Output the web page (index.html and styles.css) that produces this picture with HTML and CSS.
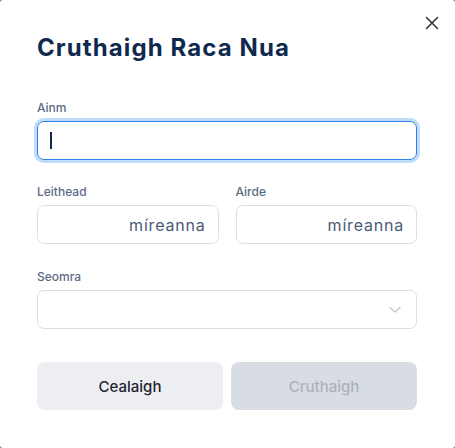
FILE: index.html
```html
<!DOCTYPE html>
<html lang="ga">
<head>
<meta charset="utf-8">
<title>Cruthaigh Raca Nua</title>
<link rel="stylesheet" href="styles.css">
</head>
<body>
<div class="dialog">
  <button class="close" aria-label="Dún">
    <svg width="14" height="14" viewBox="0 0 14 14"><path d="M1.5 1.5 L12.5 12.5 M12.5 1.5 L1.5 12.5" stroke="#333" stroke-width="1.6" stroke-linecap="round" fill="none"/></svg>
  </button>
  <h2 class="title">Cruthaigh Raca Nua</h2>
  <div class="field">
    <label class="label">Ainm</label>
    <div class="input focused"><span class="caret"></span></div>
  </div>
  <div class="row">
    <div class="field">
      <label class="label">Leithead</label>
      <div class="input unit"><span class="suffix">míreanna</span></div>
    </div>
    <div class="field">
      <label class="label">Airde</label>
      <div class="input unit"><span class="suffix">míreanna</span></div>
    </div>
  </div>
  <div class="field seomra">
    <label class="label">Seomra</label>
    <div class="input select">
      <svg width="12" height="8" viewBox="0 0 12 8"><path d="M1 1.5 L6 6 L11 1.5" stroke="#c4c8ce" stroke-width="1.4" fill="none" stroke-linecap="round" stroke-linejoin="round"/></svg>
    </div>
  </div>
  <div class="actions">
    <button class="btn cancel">Cealaigh</button>
    <button class="btn create" disabled>Cruthaigh</button>
  </div>
</div>
</body>
</html>
```
FILE: styles.css
```css
* { box-sizing: border-box; }
html, body { margin: 0; padding: 0; }
body {
  background: #7a7a7a;
  font-family: Inter, "Noto Sans", sans-serif;
  width: 455px;
  height: 448px;
  overflow: hidden;
}
.dialog {
  position: relative;
  width: 455px;
  height: 448px;
  background: #fff;
  border-radius: 3px;
  padding: 34px 38px 0 37px;
}
.close {
  position: absolute;
  top: 16px;
  right: 16px;
  width: 14px;
  height: 14px;
  padding: 0;
  border: 0;
  background: none;
  display: flex;
}
.title {
  margin: 0 0 38px;
  font-size: 24px;
  line-height: 28px;
  font-weight: 700;
  letter-spacing: 1.1px;
  color: #0f2a4e;
}
.field { display: flex; flex-direction: column; }
.field + .row { margin-top: 24px; }
.row + .field { margin-top: 25px; }
.label {
  font-size: 12px;
  line-height: 16px;
  font-weight: 500;
  color: #5c6b85;
  margin-bottom: 5px;
}
.input {
  height: 39px;
  border: 1px solid #dcdfe4;
  border-radius: 7px;
  display: flex;
  align-items: center;
  padding: 0 12px;
}
.focused {
  border-color: #2f80e8;
  box-shadow: 0 0 0 3px #bfdcfb;
}
.caret {
  width: 2px;
  height: 17px;
  background: #0f2a4e;
}
.row {
  display: grid;
  grid-template-columns: 1fr 1fr;
  gap: 17px;
}
.unit { justify-content: flex-end; }
.suffix {
  font-size: 16px;
  letter-spacing: 0.8px;
  color: #4b5a76;
}
.select { justify-content: flex-end; padding-right: 15px; }
.actions {
  margin-top: 33px;
  display: grid;
  grid-template-columns: 1fr 1fr;
  gap: 8px;
}
.btn {
  height: 48px;
  border: 0;
  border-radius: 8px;
  font-family: inherit;
  font-size: 15px;
  font-weight: 500;
}
.cancel { background: #edeef2; color: #1f2430; }
.create { background: #d8dde3; color: #aeb2b8; }
```
